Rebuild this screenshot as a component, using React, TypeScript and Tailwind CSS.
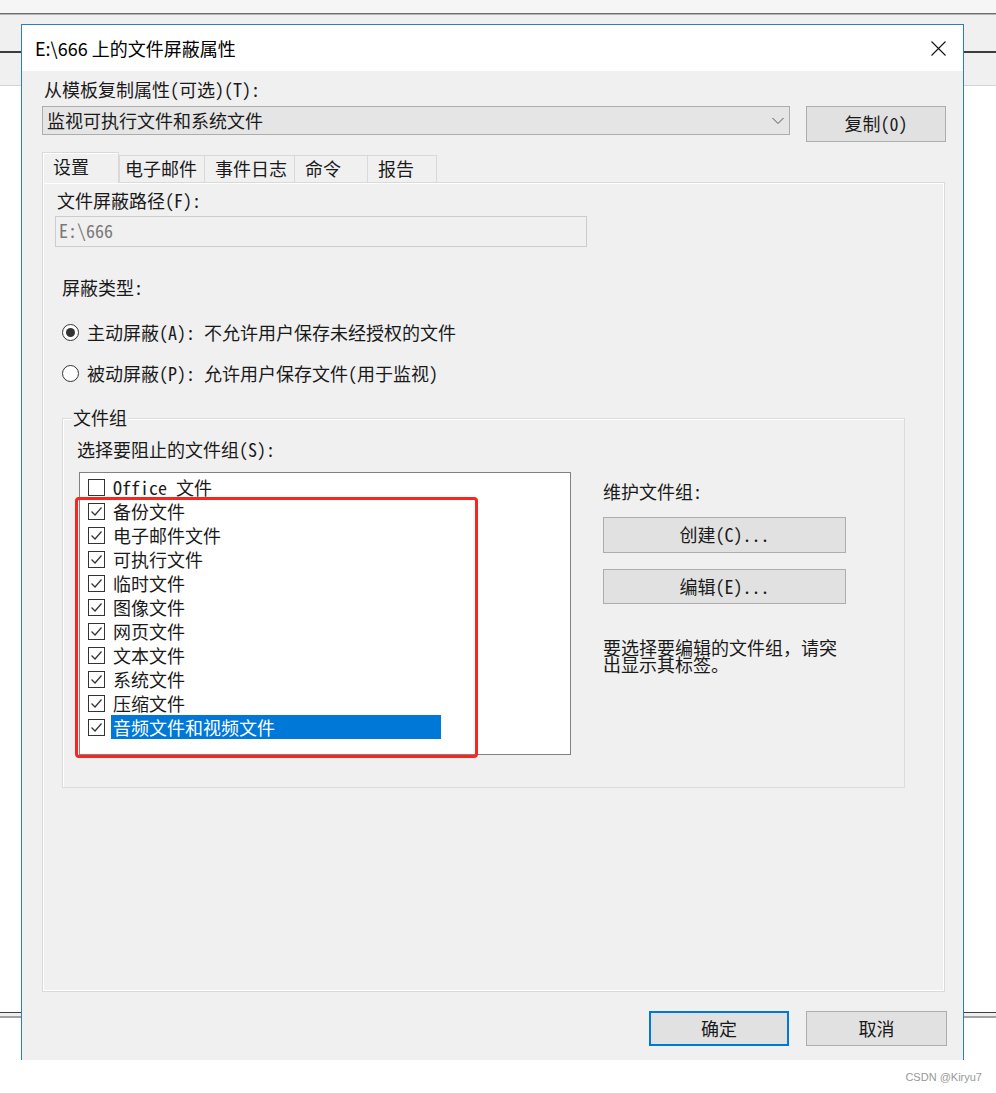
const CJK = "[font-family:'Noto_Sans_Mono_CJK_SC','Noto_Sans_CJK_SC',sans-serif]";

interface FileGroup {
  label: string;
  checked: boolean;
  selected?: boolean;
}

const fileGroups: FileGroup[] = [
  { label: 'Office 文件', checked: false },
  { label: '备份文件', checked: true },
  { label: '电子邮件文件', checked: true },
  { label: '可执行文件', checked: true },
  { label: '临时文件', checked: true },
  { label: '图像文件', checked: true },
  { label: '网页文件', checked: true },
  { label: '文本文件', checked: true },
  { label: '系统文件', checked: true },
  { label: '压缩文件', checked: true },
  { label: '音频文件和视频文件', checked: true, selected: true },
];

const tabs = [
  { label: '电子邮件', className: 'w-[86px] pl-[5px] border-l' },
  { label: '事件日志', className: 'w-[90px] pl-[10px]' },
  { label: '命令', className: 'w-[73px] pl-[10px]' },
  { label: '报告', className: 'w-[69px] pl-[10px]' },
];

function CheckBox({ checked }: { checked: boolean }) {
  return (
    <span className="w-[17px] h-[17px] border border-[#333333] bg-white flex items-center justify-center shrink-0">
      {checked && (
        <svg width="15" height="15" viewBox="0 0 15 15">
          <polyline points="2.5,7.5 6,11 12.5,3.5" fill="none" stroke="#333333" strokeWidth="1.2" />
        </svg>
      )}
    </span>
  );
}

function Radio({ checked, label }: { checked: boolean; label: string }) {
  return (
    <div className="flex items-center h-[24px] ml-[19px]">
      <span className="w-[17px] h-[17px] rounded-full border border-[#333333] bg-white flex items-center justify-center">
        {checked && <span className="w-[9px] h-[9px] rounded-full bg-[#333333]" />}
      </span>
      <span className="ml-[8px] pb-[1px]">{label}</span>
    </div>
  );
}

export default function App() {
  return (
    <div className={`relative w-[996px] h-[1093px] bg-white overflow-hidden text-[18px] leading-[24px] text-[#1a1a1a] ${CJK}`}>
      {/* background window */}
      <div className="h-[13px] bg-[#f6f6f6]" />
      <div className="h-[1px] bg-[#6f6f6f]" />
      <div className="h-[1px] bg-[#b4b4b4]" />
      <div className="h-[36px] bg-[#f0f0f0]" />
      <div className="h-[2px] bg-[#3c3c3c]" />
      <div className="h-[32px] bg-[#f0f0f0]" />
      <div className="h-[1px] bg-[#d4d4d4]" />
      <div className="h-[926px]" />
      <div className="h-[1px] bg-[#3f3f3f]" />
      <div className="h-[3px] bg-[#eeeeee]" />
      <div className="h-[2px] bg-[#a3a3a3]" />

      {/* dialog */}
      <div className="absolute left-[21px] top-[24px] w-[943px] h-[1036px] border border-b-0 border-[#2a7fc4] bg-[#f0f0f0] flex flex-col">
        <div className="h-[46px] bg-white flex items-center justify-between pl-[13px] pr-[17px]">
          <span className="[font-family:'Noto_Sans_CJK_SC',sans-serif] text-[18px] text-black pb-[1px]">E:\666 上的文件屏蔽属性</span>
          <svg width="15" height="15" viewBox="0 0 15 15">
            <path d="M0.5 0.5L14.5 14.5M14.5 0.5L0.5 14.5" stroke="#111111" strokeWidth="1.1" />
          </svg>
        </div>

        <div className="flex flex-col pl-[20px]">
          <div className="mt-[6px] pl-[2px] h-[24px]">从模板复制属性(可选)(T):</div>

          <div className="mt-[5px] flex items-start">
            <div className="w-[748px] h-[29px] border border-[#adadad] bg-[#e5e5e5] flex items-center justify-between pl-[4px] pr-[5px]">
              <span className="pb-[2px]">监视可执行文件和系统文件</span>
              <svg width="12" height="8" viewBox="0 0 12 8">
                <polyline points="0.5,1 6,6.5 11.5,1" fill="none" stroke="#555555" strokeWidth="1" />
              </svg>
            </div>
            <button className="ml-[16px] w-[140px] h-[36px] border border-[#adadad] bg-[#e1e1e1] flex items-center justify-center pb-[2px]">
              复制(0)
            </button>
          </div>

          {/* tabs */}
          <div className="mt-[10px] flex items-end h-[31px]">
            <div className="relative z-10 w-[77px] h-[31px] border border-b-0 border-[#d9d9d9] bg-[#f0f0f0] pl-[10px] pt-[1px] shadow-[inset_1px_1px_0_#ffffff]">
              设置
            </div>
            {tabs.map((t) => (
              <div
                key={t.label}
                className={`h-[28px] border-t border-r border-[#d9d9d9] bg-[#f0f0f0] flex items-center pb-[3px] ${t.className}`}
              >
                {t.label}
              </div>
            ))}
          </div>

          <div className="-mt-[1px] w-[903px] h-[810px] border border-[#d9d9d9] shadow-[inset_1px_1px_0_#ffffff,inset_-1px_-1px_0_#ffffff] flex flex-col">
            <div className="mt-[5px] ml-[14px] h-[24px]">文件屏蔽路径(F):</div>
            <div className="mt-[4px] ml-[12px] w-[532px] h-[31px] border border-[#cccccc] bg-[#f0f0f0] flex items-center pl-[3px] pb-[3px] text-[#7a7a7a]">
              E:\666
            </div>

            <div className="mt-[28px] ml-[19px] h-[24px]">屏蔽类型:</div>
            <div className="mt-[21px]">
              <Radio checked label="主动屏蔽(A): 不允许用户保存未经授权的文件" />
            </div>
            <div className="mt-[17px]">
              <Radio checked={false} label="被动屏蔽(P): 允许用户保存文件(用于监视)" />
            </div>

            {/* file group box */}
            <div className="mt-[33px] ml-[19px] w-[843px] h-[370px] border border-[#dcdcdc] shadow-[inset_1px_1px_0_#ffffff] flex flex-col">
              <div className="-mt-[14px] ml-[9px] px-[1px] w-fit h-[24px] bg-[#f0f0f0]">文件组</div>
              <div className="mt-[8px] ml-[14px] h-[24px]">选择要阻止的文件组(S):</div>

              <div className="mt-[11px] ml-[16px] flex items-start">
                <div className="w-[492px] h-[283px] border border-[#828282] bg-white pt-[2px]">
                  {fileGroups.map((g) => (
                    <div key={g.label} className="h-[24px] flex items-center pl-[8px]">
                      <CheckBox checked={g.checked} />
                      <span
                        className={`ml-[6px] pl-[2px] h-[24px] flex items-center pb-[1px] ${
                          g.selected ? 'w-[330px] bg-[#0078d7] text-white' : ''
                        }`}
                      >
                        {g.label}
                      </span>
                    </div>
                  ))}
                </div>

                <div className="ml-[32px] flex flex-col">
                  <div className="mt-[7px] h-[24px]">维护文件组:</div>
                  <button className="mt-[14px] w-[243px] h-[36px] border border-[#adadad] bg-[#e1e1e1] flex items-center justify-center pb-[2px]">
                    创建(C)...
                  </button>
                  <button className="mt-[16px] w-[243px] h-[35px] border border-[#adadad] bg-[#e1e1e1] flex items-center justify-center pb-[2px]">
                    编辑(E)...
                  </button>
                  <p className="mt-[35px] w-[243px] leading-[17px]">要选择要编辑的文件组，请突出显示其标签。</p>
                </div>
              </div>
            </div>
          </div>

          <div className="mt-[19px] flex justify-end gap-[17px] pr-[16px]">
            <button className="w-[140px] h-[35px] border-2 border-[#0078d7] bg-[#e1e1e1] flex items-center justify-center pb-[2px]">
              确定
            </button>
            <button className="w-[141px] h-[35px] border border-[#adadad] bg-[#e1e1e1] flex items-center justify-center pb-[2px]">
              取消
            </button>
          </div>
        </div>
      </div>

      {/* annotation */}
      <div className="absolute left-[75px] top-[497px] w-[403px] h-[261px] border-[3px] border-[#f8261e] rounded-[4px]" />

      <div className="absolute right-[14px] top-[1069px] text-[11px] leading-[16px] text-[#999999] [font-family:'Liberation_Sans',sans-serif]">
        CSDN @Kiryu7
      </div>
    </div>
  );
}
